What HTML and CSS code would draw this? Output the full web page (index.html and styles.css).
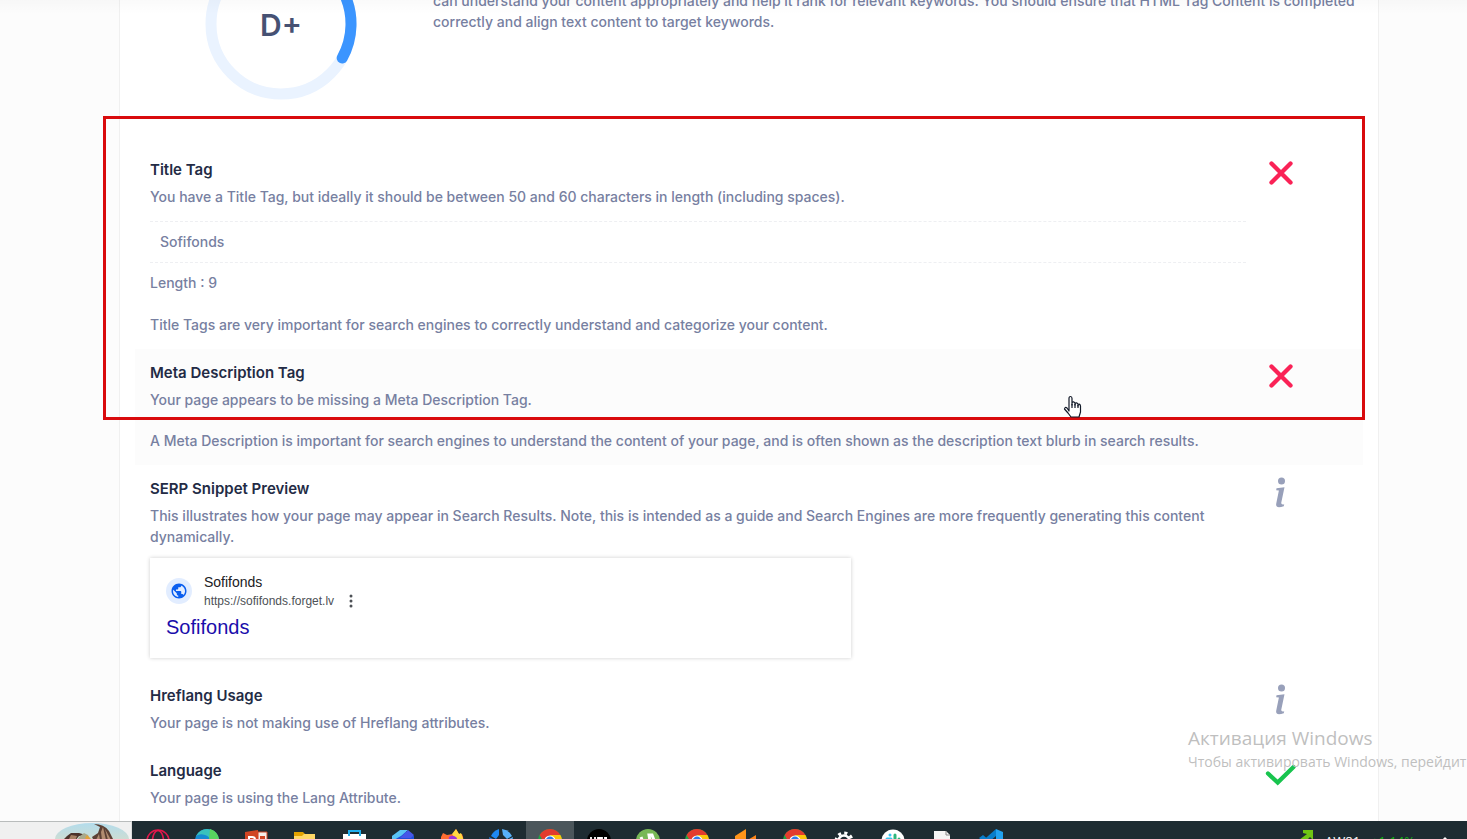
FILE: index.html
```html
<!DOCTYPE html>
<html lang="en">
<head>
  <meta charset="UTF-8">
  <meta name="viewport" content="width=device-width, initial-scale=1.0">
  <title>SEO Report - On-Page SEO</title>
  <link rel="stylesheet" href="styles.css">
</head>
<body>
  <!-- shared icons -->
  <svg class="sprite" width="0" height="0" aria-hidden="true">
    <symbol id="icon-cross" viewBox="0 0 32 32">
      <path d="M6.500 5.500 25.500 24.500M25.500 5.500 6.500 24.500" fill="none" stroke="#fa2256" stroke-width="4.300" stroke-linecap="round"/>
    </symbol>
    <symbol id="icon-info" viewBox="0 0 32 32">
      <circle cx="16.500" cy="4" r="3.500" fill="#98a0ba"/>
      <path d="M11.500 11.200 19.500 10.200 16.300 25.500Q15.800 28 19.200 27.200L18.800 29.200Q10 32.300 11.300 26.200L13.900 13.600 11.200 13.200Z" fill="#98a0ba"/>
    </symbol>
    <symbol id="icon-check" viewBox="0 0 32 32">
      <path d="M3 14.500 12.700 23.500 28.500 8" fill="none" stroke="#18c44e" stroke-width="4.300" stroke-linecap="round"/>
    </symbol>
    <symbol id="icon-chrome" viewBox="0 0 24 24">
      <circle cx="12" cy="12" r="12" fill="#1ea446"/>
      <path d="M1.600 6A12 12 0 0 1 22.400 6H12L6.800 15Z" fill="#e33b2e"/>
      <path d="M22.400 6A12 12 0 0 1 12 24L17.200 15 12 6Z" fill="#fdc50b"/>
      <circle cx="12" cy="12" r="5.600" fill="#fff"/>
      <circle cx="12" cy="12" r="4.400" fill="#2c7be9"/>
    </symbol>
  </svg>

  <main class="report">
    <div class="card">
      <section class="summary">
        <div class="grade">
          <svg class="ring" viewBox="0 0 152 152" aria-hidden="true">
            <circle cx="76" cy="76" r="70" fill="none" stroke="#eaf3ff" stroke-width="11"/>
            <path d="M76 6A70 70 0 0 1 137.200 110" fill="none" stroke="#3b95ff" stroke-width="11" stroke-linecap="round"/>
          </svg>
          <span class="grade-text">D+</span>
        </div>
        <p class="summary-text">can understand your content appropriately and help it rank for relevant keywords. You should ensure that HTML Tag Content is completed correctly and align text content to target keywords.</p>
      </section>

      <section class="check">
        <div class="check-body">
          <h2>Title Tag</h2>
          <p>You have a Title Tag, but ideally it should be between 50 and 60 characters in length (including spaces).</p>
          <div class="value">Sofifonds</div>
          <p class="length">Length : 9</p>
          <p class="more">Title Tags are very important for search engines to correctly understand and categorize your content.</p>
        </div>
        <div class="status"><svg role="img" aria-label="Failed"><use href="#icon-cross"/></svg></div>
      </section>

      <section class="check hovered">
        <div class="check-body">
          <h2>Meta Description Tag</h2>
          <p>Your page appears to be missing a Meta Description Tag.</p>
          <p class="more">A Meta Description is important for search engines to understand the content of your page, and is often shown as the description text blurb in search results.</p>
        </div>
        <div class="status"><svg role="img" aria-label="Failed"><use href="#icon-cross"/></svg></div>
      </section>

      <section class="check">
        <div class="check-body">
          <h2>SERP Snippet Preview</h2>
          <p>This illustrates how your page may appear in Search Results. Note, this is intended as a guide and Search Engines are more frequently generating this content dynamically.</p>
          <div class="snippet">
            <div class="snippet-site">
              <span class="favicon">
                <svg viewBox="0 0 24 24" aria-hidden="true"><path fill="#0b5fef" d="M12 2C6.480 2 2 6.480 2 12s4.480 10 10 10 10-4.480 10-10S17.520 2 12 2zm-1 17.930c-3.950-.490-7-3.850-7-7.930 0-.620.080-1.210.210-1.790L9 15v1c0 1.100.900 2 2 2v1.930zm6.900-2.540c-.260-.810-1-1.390-1.900-1.390h-1v-3c0-.550-.450-1-1-1H8v-2h2c.550 0 1-.450 1-1V7h2c1.100 0 2-.900 2-2v-.410c2.930 1.190 5 4.060 5 7.410 0 2.080-.800 3.970-2.100 5.390z"/></svg>
              </span>
              <div>
                <div class="site-name">Sofifonds</div>
                <div class="site-url">https://sofifonds.forget.lv
                  <svg viewBox="0 0 4 14" aria-hidden="true"><g fill="#4d5156"><circle cx="2" cy="2" r="1.500"/><circle cx="2" cy="7" r="1.500"/><circle cx="2" cy="12" r="1.500"/></g></svg>
                </div>
              </div>
            </div>
            <a class="snippet-title" href="#">Sofifonds</a>
          </div>
        </div>
        <div class="status"><svg role="img" aria-label="Info"><use href="#icon-info"/></svg></div>
      </section>

      <section class="check">
        <div class="check-body">
          <h2>Hreflang Usage</h2>
          <p>Your page is not making use of Hreflang attributes.</p>
        </div>
        <div class="status"><svg role="img" aria-label="Info"><use href="#icon-info"/></svg></div>
      </section>

      <section class="check">
        <div class="check-body">
          <h2>Language</h2>
          <p>Your page is using the Lang Attribute.</p>
        </div>
        <div class="status"><svg role="img" aria-label="Passed"><use href="#icon-check"/></svg></div>
      </section>
    </div>

    <div class="marker"></div>
    <svg class="cursor" viewBox="0 0 20 24" aria-hidden="true">
      <path d="M6 16V3.500Q6 1.500 7.500 1.500T9 3.500V10 7.500Q10.500 6 12 8V10 8.500Q13.500 7 15 9V11 9.500Q17 8.500 17.500 11V17L16 22H8L5 18 1.500 14Q2 11.500 4 13Z" fill="#fff" stroke="#111827" stroke-width="1.200" stroke-linejoin="round"/>
      <path d="M9 9V13M12 9V13M15 10V13" stroke="#111827" stroke-width="1.200"/>
    </svg>
    <div class="activation" lang="ru">
      <div class="activation-title">Активация Windows</div>
      <div>Чтобы активировать Windows, перейдит</div>
    </div>
  </main>

  <footer class="taskbar">
    <div class="search">
      <svg viewBox="0 0 74 32" aria-hidden="true">
        <defs><linearGradient id="sky" x2="0" y2="1"><stop offset="0" stop-color="#b3dcec"/><stop offset="1" stop-color="#e5ddbb"/></linearGradient></defs>
        <ellipse cx="37" cy="16" rx="37" ry="16" fill="url(#sky)"/>
        <path d="M12 13 16 10 24 10 31 12 24 13 20 18H7Z" fill="#4d332b"/>
        <path d="M13 18 16 12 22 13 20 18Z" fill="#a58063"/>
        <path d="M39 1Q49 1 54 8L59 18H39L37 14 43 10 45 4Z" fill="#5b4035"/>
        <path d="M46 9 48 4 51 17H47ZM50 6 56 17H53ZM44 11 45 17H41Z" fill="#b28c70"/>
        <path d="M24 14 29 10 33 12 36 18H22Z" fill="#a9a98c"/>
        <path d="M32 12 36 16 33 18 30 15Z" fill="#e1a23b"/>
      </svg>
    </div>
    <nav class="apps">
      <button aria-label="Opera GX"><svg viewBox="0 0 24 24"><circle cx="12" cy="12" r="11" fill="none" stroke="#e0184b" stroke-width="1.600"/><ellipse cx="12" cy="12" rx="5.500" ry="10.500" fill="none" stroke="#e0184b" stroke-width="1.600"/></svg></button>
      <button aria-label="Edge"><svg viewBox="0 0 24 24"><circle cx="12" cy="12" r="12" fill="#168bd2"/><path d="M1 7Q5 0 12 0 22 0 24 11 18 16 14 12 16 8 10 6 5 4 1 7Z" fill="#39c2bd"/><path d="M15 0Q24 3 24 12L16 14 14 10Z" fill="#58d45f"/></svg></button>
      <button aria-label="PowerPoint"><svg viewBox="0 0 24 24"><path d="M1 3 14 1V23L1 21Z" fill="#d14524"/><path d="M14 3H23V21H14Z" fill="#f5ede9" stroke="#d14524"/><path d="M5 16V8H8Q11 8 11 10.500T8 13H5" fill="none" stroke="#fff" stroke-width="2"/><path d="M16 7H21V10H16Z" fill="#d14524"/></svg></button>
      <button aria-label="File Explorer"><svg viewBox="0 0 24 24"><path d="M1 3H10L12 5H22V20H1Z" fill="#e2a100"/><path d="M1 7H9L11 5H22V20H1Z" fill="#ffd766"/></svg></button>
      <button aria-label="Store"><svg viewBox="0 0 24 24"><path d="M1 5H24V21H1Z" fill="#fff"/><path d="M7 7V2H18V7" fill="none" stroke="#20aeee" stroke-width="2"/></svg></button>
      <button aria-label="Microsoft 365"><svg viewBox="0 0 24 24"><path d="M12 1 23 7V16L12 22 1 16V7Z" fill="#1e4fd8"/><path d="M1 7 9 1H17L10 7 1 12Z" fill="#5ac4f5"/><path d="M17 1 23 6 20 9H9Z" fill="#4657e8"/></svg></button>
      <button aria-label="Firefox"><svg viewBox="0 0 24 24"><path d="M1 8 3 4 7 6 13 5 16 0 19 5 22 5Q25 12 21 18A11 11 0 0 1 1 14Z" fill="#ff6c32"/><path d="M12 5 16 0 19 5 21 4 24 12 17 12Z" fill="#ffd842"/><path d="M9 8Q13 5 17 9L16 15H8Z" fill="#9a34d9"/></svg></button>
      <button aria-label="Team app"><svg viewBox="0 0 24 24"><path d="M10 0V6L7 10 2 7Q4 2 10 0Z" fill="#1e88f2"/><path d="M13 0Q20 1 23 7L18 10 14 6Z" fill="#58b1fb"/><path d="M0 8 6 11V20L2 18Z" fill="#2477d5"/><path d="M24 8 18 11V20L22 18Z" fill="#58b1fb"/></svg></button>
      <button class="active" aria-label="Chrome"><svg viewBox="0 0 24 24"><use href="#icon-chrome"/></svg></button>
      <button aria-label="UC"><svg viewBox="0 0 24 24"><circle cx="12" cy="12" r="12" fill="#000"/><path d="M4 8V13H8V8M11 14V9H15V14M20 9H18V14" fill="none" stroke="#fff" stroke-width="1.800"/></svg></button>
      <button aria-label="uTorrent"><svg viewBox="0 0 24 24"><circle cx="12" cy="12" r="12" fill="#78b856"/><path d="M5 8 8 16Q14 19 14 12L13 6H16L19 14" fill="none" stroke="#fff" stroke-width="3"/></svg></button>
      <button aria-label="Chrome"><svg viewBox="0 0 24 24"><use href="#icon-chrome"/></svg></button>
      <button aria-label="Media"><svg viewBox="0 0 24 24"><path d="M1 7 12 0V16L1 12Z" fill="#ff941a"/><path d="M12 12 22 6V14L12 20Z" fill="#ff8517"/></svg></button>
      <button aria-label="Chrome"><svg viewBox="0 0 24 24"><use href="#icon-chrome"/></svg></button>
      <button aria-label="Settings"><svg viewBox="0 0 24 24"><circle cx="12" cy="12" r="5.500" fill="none" stroke="#fff" stroke-width="2.500"/><circle cx="12" cy="12" r="8" fill="none" stroke="#fff" stroke-width="3" stroke-dasharray="3.140 3.140"/></svg></button>
      <button aria-label="Slack"><svg viewBox="0 0 24 24"><circle cx="12" cy="12" r="11.500" fill="#fff"/><g fill="none" stroke-width="3" stroke-linecap="round"><path d="M9 6V6.100M6 10H10" stroke="#36c5f0"/><path d="M14 6V10M18 10V10.100" stroke="#2eb67d"/><path d="M10 14V18" stroke="#e01e5a"/><path d="M14 14H18" stroke="#ecb22e"/></g></svg></button>
      <button aria-label="Document"><svg viewBox="0 0 24 24"><path d="M4 2H16L20 6V23H4Z" fill="#f5f5f5"/><path d="M16 2V6H20" fill="none" stroke="#888"/></svg></button>
      <button aria-label="VS Code"><svg viewBox="0 0 24 24"><path d="M17 0 24 3V21L17 24Z" fill="#22a1ee"/><path d="M17 0V7L4 18 0 15Z" fill="#087dcb"/><path d="M0 9 4 6 17 17V24Z" fill="#087dcb"/></svg></button>
    </nav>
    <div class="tray">
      <svg class="trend" viewBox="0 0 14 16" aria-hidden="true"><path d="M3 1H13V11L10 8 3 15 -1 11 7 5 3 4Z" fill="#70c514"/></svg>
      <span>AW81</span>
      <span class="gain">+1.14%</span>
      <svg class="caret" viewBox="0 0 12 8" aria-hidden="true"><path d="M1 7 6 2 11 7" fill="none" stroke="#fff" stroke-width="1.500"/></svg>
    </div>
  </footer>
</body>
</html>
```

FILE: styles.css
```css
* {
  box-sizing: border-box;
}
body {
  margin: 0;
  height: 100vh;
  display: flex;
  flex-direction: column;
  overflow: hidden;
  font-family: Inter, "Open Sans", sans-serif;
  font-size: 14px;
  font-weight: 500;
  line-height: 21px;
  color: #7780a1;
  background: #fcfcfc;
}
h2, p {
  margin: 0;
}
.sprite {
  position: absolute;
}
.report {
  position: relative;
  flex: 1;
  min-height: 0;
  overflow: hidden;
  padding: 0 88px 0 119px;
}
.report::before {
  content: "";
  position: absolute;
  top: 0;
  left: 0;
  right: 0;
  height: 14px;
  background: linear-gradient(rgba(0, 0, 0, 0.02), transparent);
}
.card {
  background: #fff;
  border: 1px solid #f0f0f0;
  border-width: 0 1px;
  padding: 0 15px;
  min-height: 100%;
}
/* page is scrolled part way into the summary */
.summary {
  display: flex;
  margin-top: -52px;
  height: 198px;
}
.grade {
  flex: 0 0 298px;
  display: grid;
  justify-items: center;
  align-content: start;
  padding-right: 6px;
}
.ring, .grade-text {
  grid-area: 1 / 1;
}
.ring {
  width: 152px;
  height: 152px;
}
.grade-text {
  align-self: center;
  padding-top: 2px;
  font-size: 30px;
  font-weight: 600;
  line-height: 36px;
  color: #465173;
}
.summary-text {
  padding-top: 42px;
}
.check {
  display: flex;
}
.hovered {
  background: #fcfcfc;
}
.check-body {
  flex: 0 0 91.66%;
  padding: 13px 15px 14px;
}
.check h2 {
  margin-bottom: 5px;
  font-size: 15px;
  font-weight: 600;
  line-height: 22px;
  color: #232b45;
}
.value {
  margin: 14px 0 9px;
  padding: 9px 10px 10px;
  border: 1px dashed #eeeff2;
  border-width: 1px 0;
}
.length {
  margin-bottom: 21px;
}
.more {
  margin-top: 20px;
}
.status {
  flex: 1;
  padding: 12px 4px;
}
.status svg {
  display: block;
  width: 32px;
  height: 32px;
}
.snippet {
  max-width: 701px;
  min-height: 100px;
  margin-top: 11px;
  padding: 14px 16px;
  background: #fff;
  box-shadow: 0 0 4px rgba(0, 0, 0, 0.2);
  font-family: "Liberation Sans", Arial, sans-serif;
  font-weight: 400;
}
.snippet-site {
  display: flex;
  align-items: center;
  gap: 12px;
}
.favicon {
  display: flex;
  align-items: center;
  justify-content: center;
  width: 26px;
  height: 26px;
  border-radius: 50%;
  background: #e2edff;
}
.favicon svg {
  width: 18px;
  height: 18px;
}
.site-name {
  line-height: 20px;
  color: #202124;
}
.site-url {
  display: flex;
  align-items: center;
  gap: 15px;
  font-size: 12px;
  line-height: 18px;
  color: #4d5156;
}
.site-url svg {
  width: 4px;
  height: 14px;
}
.snippet-title {
  display: block;
  margin-top: 4px;
  font-size: 20px;
  line-height: 26px;
  color: #1a0dab;
  text-decoration: none;
}

/* overlays */
.marker {
  position: absolute;
  top: 116px;
  left: 103px;
  right: 102px;
  height: 304px;
  border: 3px solid #d90b0d;
}
.cursor {
  position: absolute;
  top: 395px;
  left: 1063px;
  width: 20px;
  height: 24px;
}
.activation {
  position: absolute;
  top: 725px;
  left: 1188px;
  font-family: "Open Sans", "Noto Sans", sans-serif;
  font-weight: 400;
  font-size: 14px;
  white-space: nowrap;
  color: #bfbfbf;
}
.activation-title {
  font-size: 19px;
  line-height: 26px;
}

.taskbar {
  flex: 0 0 18px;
  display: flex;
  overflow: hidden;
  background: #1e2c32;
}
.search {
  flex: 0 0 132px;
  padding: 1px 2px 0 55px;
  border-top: 1px solid #b9bcbc;
  border-right: 1px solid #dcdcdc;
  background: #f0f0f0;
}
.search svg {
  display: block;
  width: 74px;
  height: 32px;
}
.apps {
  display: flex;
  align-items: flex-start;
  gap: 1px;
  margin-left: 2px;
}
.apps button {
  width: 48px;
  height: 40px;
  padding: 8px 12px;
  border: 0;
  background: none;
}
.apps .active {
  background: #4b565b;
}
.apps svg {
  display: block;
  width: 24px;
  height: 24px;
}
.tray {
  display: flex;
  align-items: flex-start;
  gap: 11px;
  margin-left: auto;
  padding: 8px 16px 0 0;
  font-family: "Open Sans", sans-serif;
  font-size: 13px;
  font-weight: 400;
  line-height: 24px;
  color: #fff;
}
.trend {
  width: 14px;
  height: 16px;
}
.gain {
  color: #13b313;
}
.caret {
  width: 12px;
  height: 8px;
  margin: 7px 0 0 13px;
}
```
